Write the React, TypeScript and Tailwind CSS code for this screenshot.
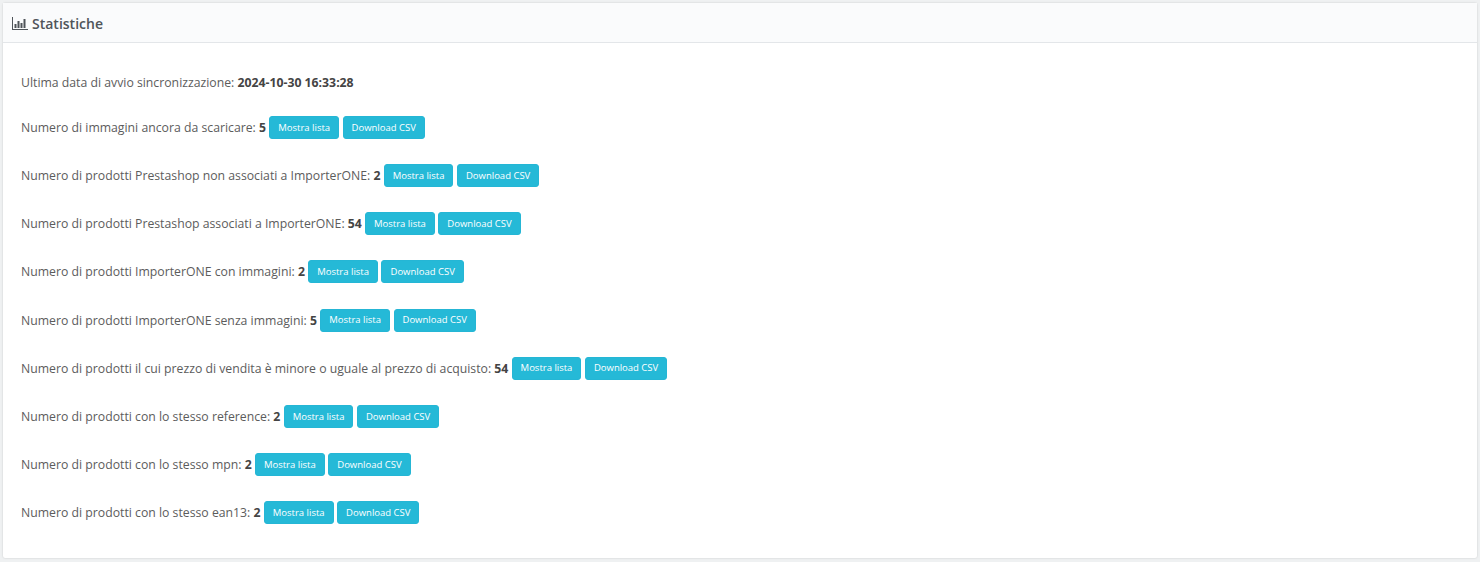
const ROWS = [
  { label: "Numero di immagini ancora da scaricare:", value: "5" },
  { label: "Numero di prodotti Prestashop non associati a ImporterONE:", value: "2" },
  { label: "Numero di prodotti Prestashop associati a ImporterONE:", value: "54" },
  { label: "Numero di prodotti ImporterONE con immagini:", value: "2" },
  { label: "Numero di prodotti ImporterONE senza immagini:", value: "5" },
  { label: "Numero di prodotti il cui prezzo di vendita è minore o uguale al prezzo di acquisto:", value: "54" },
  { label: "Numero di prodotti con lo stesso reference:", value: "2" },
  { label: "Numero di prodotti con lo stesso mpn:", value: "2" },
  { label: "Numero di prodotti con lo stesso ean13:", value: "2" },
];

function ChartIcon() {
  return (
    <svg width="16" height="13" viewBox="0 0 16 13" fill="currentColor" className="shrink-0">
      <rect x="0" y="0" width="1" height="13" />
      <rect x="0" y="12" width="16" height="1" />
      <rect x="2.5" y="7" width="2" height="4" />
      <rect x="5.5" y="4" width="2" height="7" />
      <rect x="8.5" y="6" width="2" height="5" />
      <rect x="11.5" y="2" width="2" height="9" />
    </svg>
  );
}

function ActionButton({ children }: { children: string }) {
  return (
    <button className="h-[23px] rounded-[3px] border border-[#25b6d5] bg-[#25b9d7] px-2 text-[9.5px] leading-none text-white">
      {children}
    </button>
  );
}

export default function App() {
  return (
    <div className="h-[562px] w-[1480px] bg-[#eff1f2] p-[3px] font-['Open_Sans',sans-serif] text-[#5c5c5c]">
      <div className="h-[555px] rounded-[2px] bg-white shadow-[0_0_2px_rgba(0,0,0,0.18)]">
        <div className="flex h-[40px] items-center gap-1 border-b border-[#e3e6e9] bg-[#fafbfc] pl-[9px] pt-[2px] text-[#4f5459]">
          <ChartIcon />
          <h3 className="text-[14px] font-semibold">Statistiche</h3>
        </div>
        <div className="px-[18px] pt-[31px] text-[12.25px]">
          <p className="h-[18px] leading-[18px]">
            Ultima data di avvio sincronizzazione: <strong className="font-bold text-[#444]">2024-10-30 16:33:28</strong>
          </p>
          <div className="mt-[24px] flex flex-col gap-[25.125px]">
            {ROWS.map((row) => (
              <div key={row.label} className="flex h-[23px] items-start">
                <span className="whitespace-pre leading-[23px]">
                  {row.label} <strong className="font-bold text-[#444]">{row.value}</strong>
                </span>
                <div className="ml-[3.25px] flex gap-[3.5px]">
                  <ActionButton>Mostra lista</ActionButton>
                  <ActionButton>Download CSV</ActionButton>
                </div>
              </div>
            ))}
          </div>
        </div>
      </div>
    </div>
  );
}
